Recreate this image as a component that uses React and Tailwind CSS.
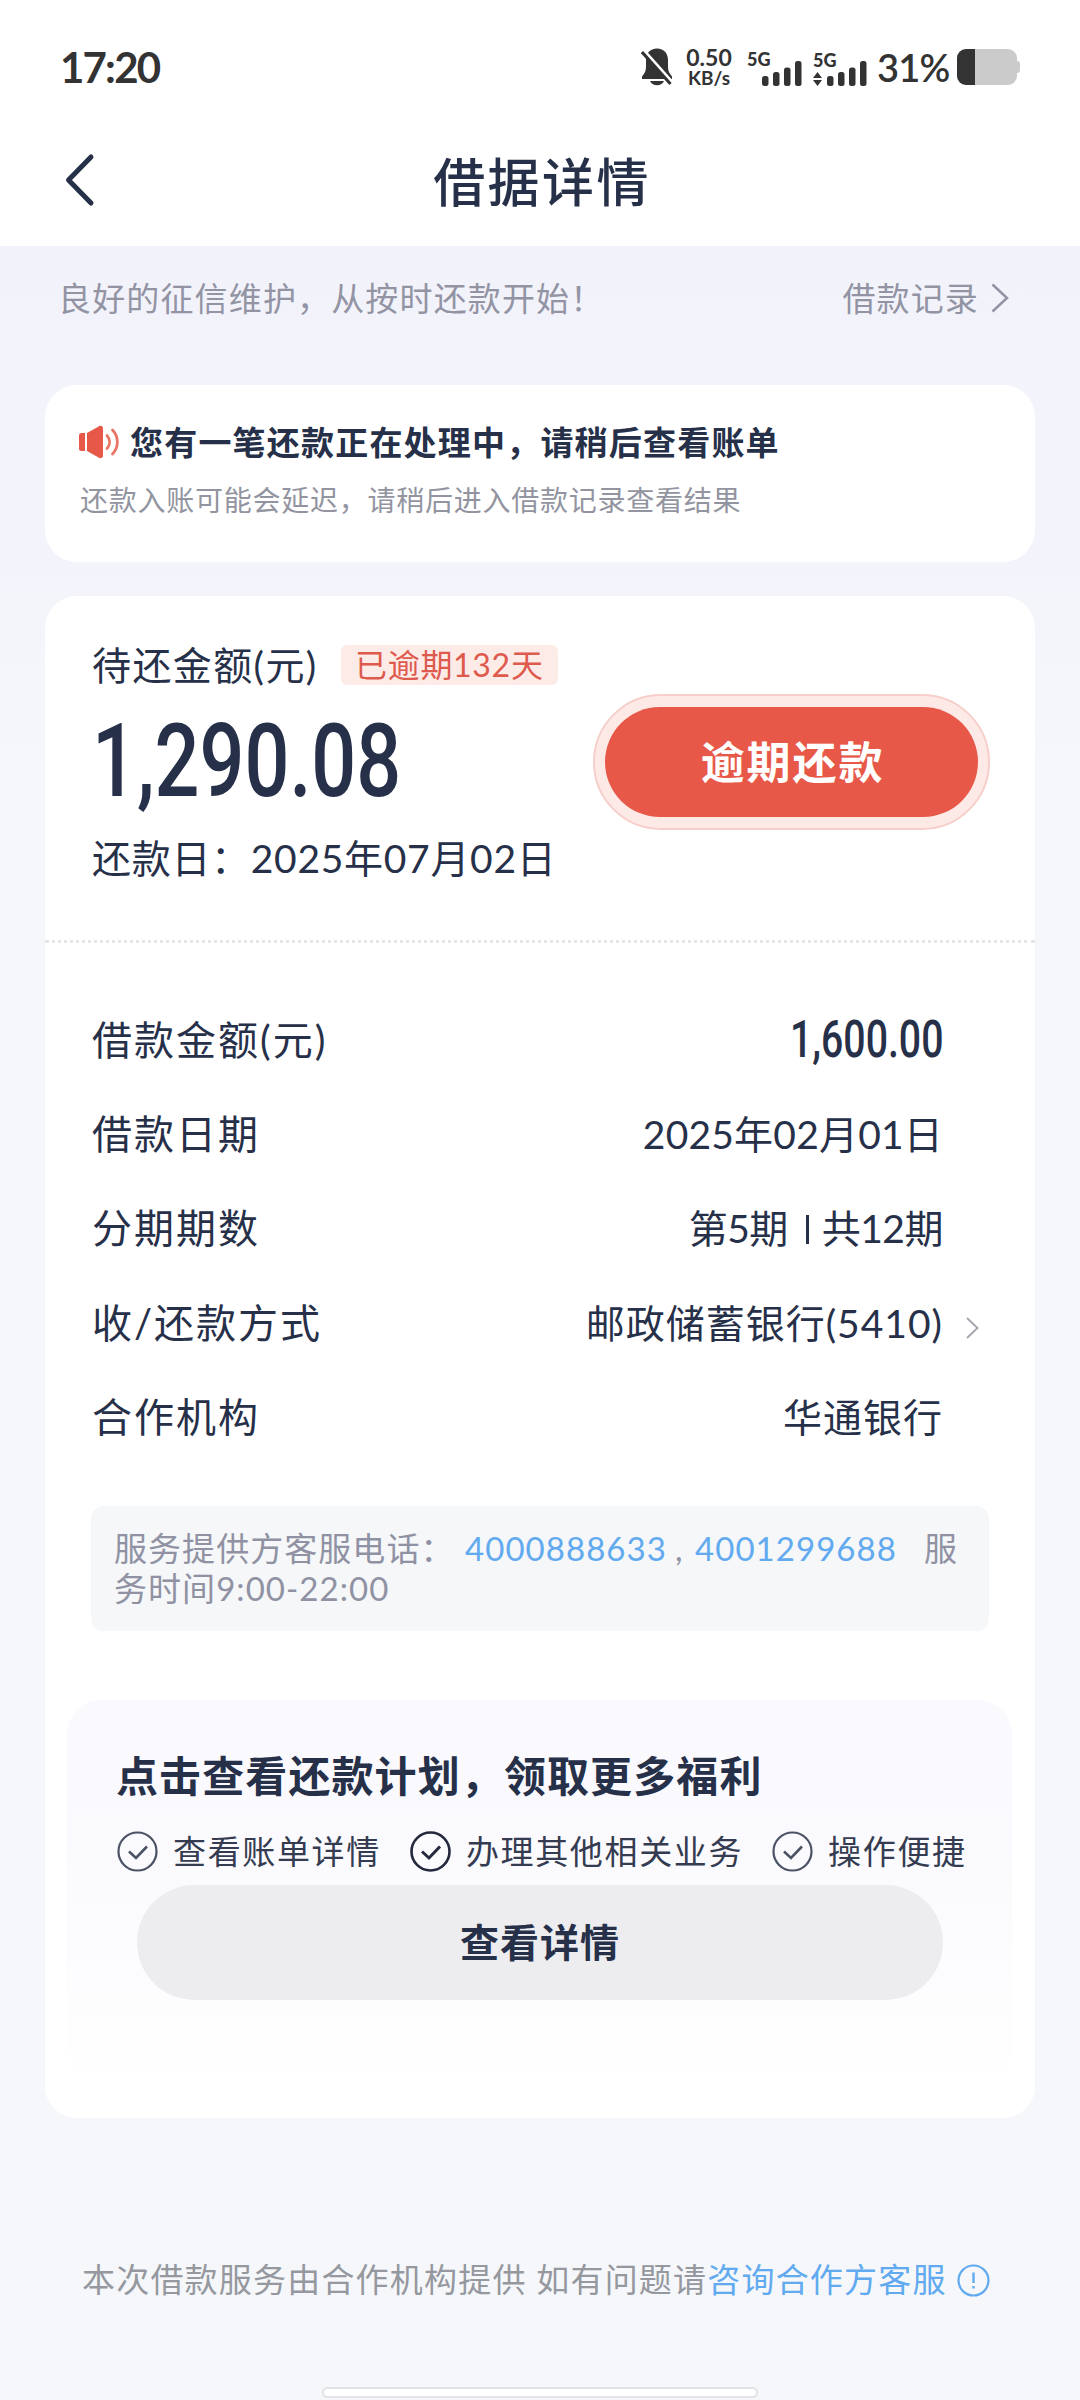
const loanRows = [
  { label: '借款金额(元)', value: '1,600.00', type: 'amount' },
  { label: '借款日期', value: '2025年02月01日' },
  { label: '分期期数', value: ['第5期', '共12期'], type: 'split' },
  { label: '收/还款方式', value: '邮政储蓄银行(5410)', type: 'link' },
  { label: '合作机构', value: '华通银行', type: 'org' },
];

const SignalBars = () => (
  <svg width="40" height="25" viewBox="0 0 40 25" fill="#333333">
    <rect x="0" y="15" width="6.5" height="10" rx="2.5" />
    <rect x="11" y="11" width="6.5" height="14" rx="2.5" />
    <rect x="22" y="6.5" width="6.5" height="18.5" rx="2.5" />
    <rect x="33" y="0" width="6.5" height="25" rx="2.5" />
  </svg>
);

const StatusBar = () => (
  <div className="flex h-[134px] items-center justify-between pl-[60px] pr-[60px] text-[#333333]">
    <span className="text-[42px] font-bold leading-none tracking-[-1.8px]">17:20</span>
    <div className="flex h-[40px] items-center">
      <svg className="mr-[13px]" width="32" height="38" viewBox="0 0 32 38">
        <path
          d="M16 0.5C9 0.5 5 5.5 5 12v7c0 4-1.5 6.500-4 9.500V31h30v-2.500c-2.500-3-4-5.500-4-9.500v-7C27 5.500 23 .5 16 .5Z"
          fill="#333333"
        />
        <path d="M9 33h14c-1.500 3-4 4.200-7 4.200S10.500 36 9 33Z" fill="#333333" />
        <path d="M2.500 2 31 34" stroke="#ffffff" strokeWidth="3" />
        <path d="M1 4 29.500 36" stroke="#333333" strokeWidth="3" />
      </svg>
      <div className="mr-[15px] flex w-[46px] flex-col items-center font-bold">
        <span className="text-[23px] leading-[22px]">0.50</span>
        <span className="text-[19px] leading-[20px]">KB/s</span>
      </div>
      <div className="mr-[11px] flex h-[38px] w-[55px] items-end">
        <span className="mb-[15px] w-[15px] text-[18px] font-black leading-[24px]">5G</span>
        <SignalBars />
      </div>
      <div className="mr-[10px] flex h-[38px] w-[54px] items-end">
        <div className="mr-[5px] flex w-[9px] flex-col">
          <span className="text-[18px] font-black leading-[24px]">5G</span>
          <svg width="9" height="14" viewBox="0 0 9 14" fill="#333333">
            <path d="M4.500 0 9 6H0ZM4.500 14 0 8h9Z" />
          </svg>
        </div>
        <SignalBars />
      </div>
      <span className="mr-[8px] w-[72px] text-[38px] font-semibold leading-none tracking-[-0.8px]">31%</span>
      <div className="flex h-[36px] w-[60px] overflow-hidden rounded-[9px] bg-[#cbcbcb]">
        <div className="w-[18px] bg-[#333333]" />
      </div>
      <div className="h-[12px] w-[3px] rounded-r-[3px] bg-[#cbcbcb]" />
    </div>
  </div>
);

const Header = () => (
  <div className="flex h-[112px] items-start px-[64px]">
    <svg className="mt-[19px]" width="32" height="54" viewBox="0 0 32 54" fill="none">
      <path
        d="M27 4 4.500 27 27 50"
        stroke="#273049"
        strokeWidth="5"
        strokeLinecap="round"
        strokeLinejoin="round"
      />
    </svg>
    <h1 className="mr-[28px] mt-[18px] flex-1 text-center text-[52px] font-medium leading-[60px] tracking-[2.4px]">
      借据详情
    </h1>
  </div>
);

const Check = ({ dark }) => (
  <svg
    width="41"
    height="41"
    viewBox="0 0 41 41"
    fill="none"
    stroke={dark ? '#23283d' : '#4a5263'}
    strokeWidth={dark ? 2.6 : 2.2}
  >
    <circle cx="20.500" cy="20.500" r="19" />
    <path d="M12 20.500 19 27 30 15.500" strokeWidth={dark ? 3 : 2.6} />
  </svg>
);

const Benefit = ({ text, dark }) => (
  <div className="flex items-center gap-[15px]">
    <Check dark={dark} />
    <span className="whitespace-nowrap text-[33px] leading-[41px] tracking-[1.650px] text-[#353b50]">{text}</span>
  </div>
);

const RowValue = ({ row }) => {
  if (row.type === 'amount') {
    return (
      <span className="inline-block origin-right scale-x-[0.77] pt-[2px] font-['Roboto'] text-[51px] font-medium tracking-normal">
        {row.value}
      </span>
    );
  }
  if (row.type === 'split') {
    return (
      <span className="flex items-center tracking-[-0.5px]">
        {row.value[0]}
        <i className="ml-[18px] mr-[13px] mt-[3px] h-[29px] w-[3px] bg-[#273049]" />
        {row.value[1]}
      </span>
    );
  }
  if (row.type) return <span className="tracking-[1px]">{row.value}</span>;
  return <span className="tracking-[0.2px]">{row.value}</span>;
};

const App = () => {
  return (
    <div className="h-[2400px] w-[1080px] overflow-hidden bg-white font-['Lato','Noto_Sans_CJK_SC',sans-serif] text-[#273049]">
      <StatusBar />
      <Header />

      <div className="flex h-[2154px] flex-col bg-[#f5f7fa] bg-[linear-gradient(180deg,#f2f2fb_0px,#f3f4fb_300px,#f5f7fa_520px)] px-[45px]">
        <div className="flex h-[139px] items-start justify-between pl-[13px] pr-[26px] pt-[32px] text-[33px] leading-[40px] tracking-[1.150px] text-[#9294a4]">
          <span>良好的征信维护，从按时还款开始！</span>
          <span className="flex items-center">
            借款记录
            <svg className="ml-[12px]" width="18" height="30" viewBox="0 0 18 30" fill="none">
              <path d="M1.500 1.500 16 15 1.500 28.500" stroke="#9294a4" strokeWidth="2.500" />
            </svg>
          </span>
        </div>

        {/* processing notice */}
        <div className="h-[177px] rounded-[32px] bg-white pl-[34px] pt-[36px]">
          <div className="flex h-[42px] items-center">
            <svg className="mr-[11px]" width="40" height="34" viewBox="0 0 40 34" fill="none">
              <path d="M0 10.500a2.500 2.500 0 0 1 2.500-2.500H6v18H2.500A2.500 2.500 0 0 1 0 23.500Z" fill="#e75848" />
              <path d="M8 8 20 1.200c2-1 4 0 4 2v27.600c0 2-2 3-4 2L8 26Z" fill="#e75848" />
              <path d="M28 10.500c3.500 4 3.500 9 0 13" stroke="#ea7468" strokeWidth="2.800" strokeLinecap="round" />
              <path d="M33.500 5c6.500 7 6.500 17 0 24" stroke="#ea7468" strokeWidth="2.800" strokeLinecap="round" />
            </svg>
            <span className="text-[33px] font-bold leading-[42px] tracking-[1.2px]">
              您有一笔还款正在处理中，请稍后查看账单
            </span>
          </div>
          <p className="mt-[17px] pl-[1px] text-[28px] leading-[40px] tracking-[0.75px] text-[#92949f]">
            还款入账可能会延迟，请稍后进入借款记录查看结果
          </p>
        </div>

        <div className="mt-[34px] h-[1522px] rounded-[32px] bg-white">
          <div className="flex h-[344px] justify-between pl-[47px] pr-[45px]">
            <div className="pt-[45px]">
              <div className="flex items-center">
                <span className="w-[249px] whitespace-nowrap text-[39px] leading-[48px] tracking-[1.4px]">
                  待还金额(元)
                </span>
                <span className="flex h-[40px] items-center rounded-[6px] bg-[#fdebe8] px-[14px] text-[32px] tracking-[0.7px] text-[#dd5a4d]">
                  已逾期132天
                </span>
              </div>
              <div className="mt-[27px] h-[90px] w-[380px] origin-left scale-x-[0.775] whitespace-nowrap font-['Roboto'] text-[102px] font-medium leading-[90px]">
                1,290.08
              </div>
              <div className="mt-[28px] text-[39px] leading-[48px] tracking-[0.7px]">还款日：2025年07月02日</div>
            </div>
            <button className="mt-[98px] flex h-[136px] w-[397px] items-center justify-center rounded-full border-2 border-[#f6cfca] bg-[#fdeae7]">
              <span className="flex h-[110px] w-[373px] items-center justify-center rounded-full bg-[#e75848] pl-[2px] text-[44px] font-bold tracking-[1.9px] text-white">
                逾期还款
              </span>
            </button>
          </div>

          <div className="border-t-[3px] border-dotted border-[#e6e6ea]" />

          <div className="flex flex-col pl-[47px] pt-[50px]">
            {loanRows.map((row) => (
              <div key={row.label} className="flex h-[94.200px] items-center leading-[48px]">
                <span className="flex-1 text-[40px] tracking-[2px]">{row.label}</span>
                <span className="pl-[1px] text-[39px]">
                  <RowValue row={row} />
                </span>
                <span className="flex w-[92px] justify-start pl-[23px]">
                  {row.type === 'link' && (
                    <svg className="mt-[10px]" width="13" height="22" viewBox="0 0 13 22" fill="none">
                      <path d="M1 1 11.500 11 1 21" stroke="#a2a4ab" strokeWidth="1.800" />
                    </svg>
                  )}
                </span>
              </div>
            ))}
          </div>

          <div className="ml-[46px] mt-[42px] h-[125px] w-[898px] whitespace-nowrap rounded-[12px] bg-[#f5f7f9] pl-[23px] pt-[22px] text-[33px] leading-[40px] tracking-[1.050px] text-[#9092a3]">
            <div className="flex">
              <span className="w-[351px]">服务提供方客服电话：</span>
              <span className="w-[210px] text-[#62aaf0]">4000888633</span>
              <span className="w-[20px]">,</span>
              <span className="w-[229px] text-[#62aaf0]">4001299688</span>
              <span>服</span>
            </div>
            <div>务时间9:00-22:00</div>
          </div>

          {/* repayment plan promo */}
          <div className="ml-[22px] mt-[69px] h-[395px] w-[945px] rounded-t-[34px] bg-[linear-gradient(180deg,#f9f9fe_0%,#fbfbfe_50%,#ffffff_100%)] pl-[49px] pt-[50px]">
            <h2 className="text-[42px] font-bold leading-[52px] tracking-[1.1px]">点击查看还款计划，领取更多福利</h2>
            <div className="mt-[29px] flex gap-[29px] pl-[1px]">
              <Benefit text="查看账单详情" />
              <Benefit text="办理其他相关业务" dark />
              <Benefit text="操作便捷" />
            </div>
            <button className="ml-[21px] mt-[13px] flex h-[115px] w-[806px] items-center justify-center rounded-full bg-[#ededf0] text-[39px] font-bold tracking-[1px]">
              查看详情
            </button>
          </div>
        </div>

        <div className="mt-[140px] flex h-[44px] items-center whitespace-nowrap pl-[37px] text-[33px] tracking-[1.200px] text-[#96989f]">
          <span>本次借款服务由合作机构提供 如有问题请</span>
          <span className="text-[#62aaf0]">咨询合作方客服</span>
          <svg className="ml-[10px]" width="33" height="33" viewBox="0 0 33 33" fill="none" stroke="#62aaf0">
            <circle cx="16.500" cy="16.500" r="15" strokeWidth="2.200" />
            <path d="M16.500 8.500v10.500M16.500 22v2.500" strokeWidth="2.400" />
          </svg>
        </div>

        <div className="mx-auto mb-[2px] mt-auto h-[11px] w-[436px] rounded-full border-2 border-[#e3e4e7] bg-white" />
      </div>
    </div>
  );
};

export default App;
